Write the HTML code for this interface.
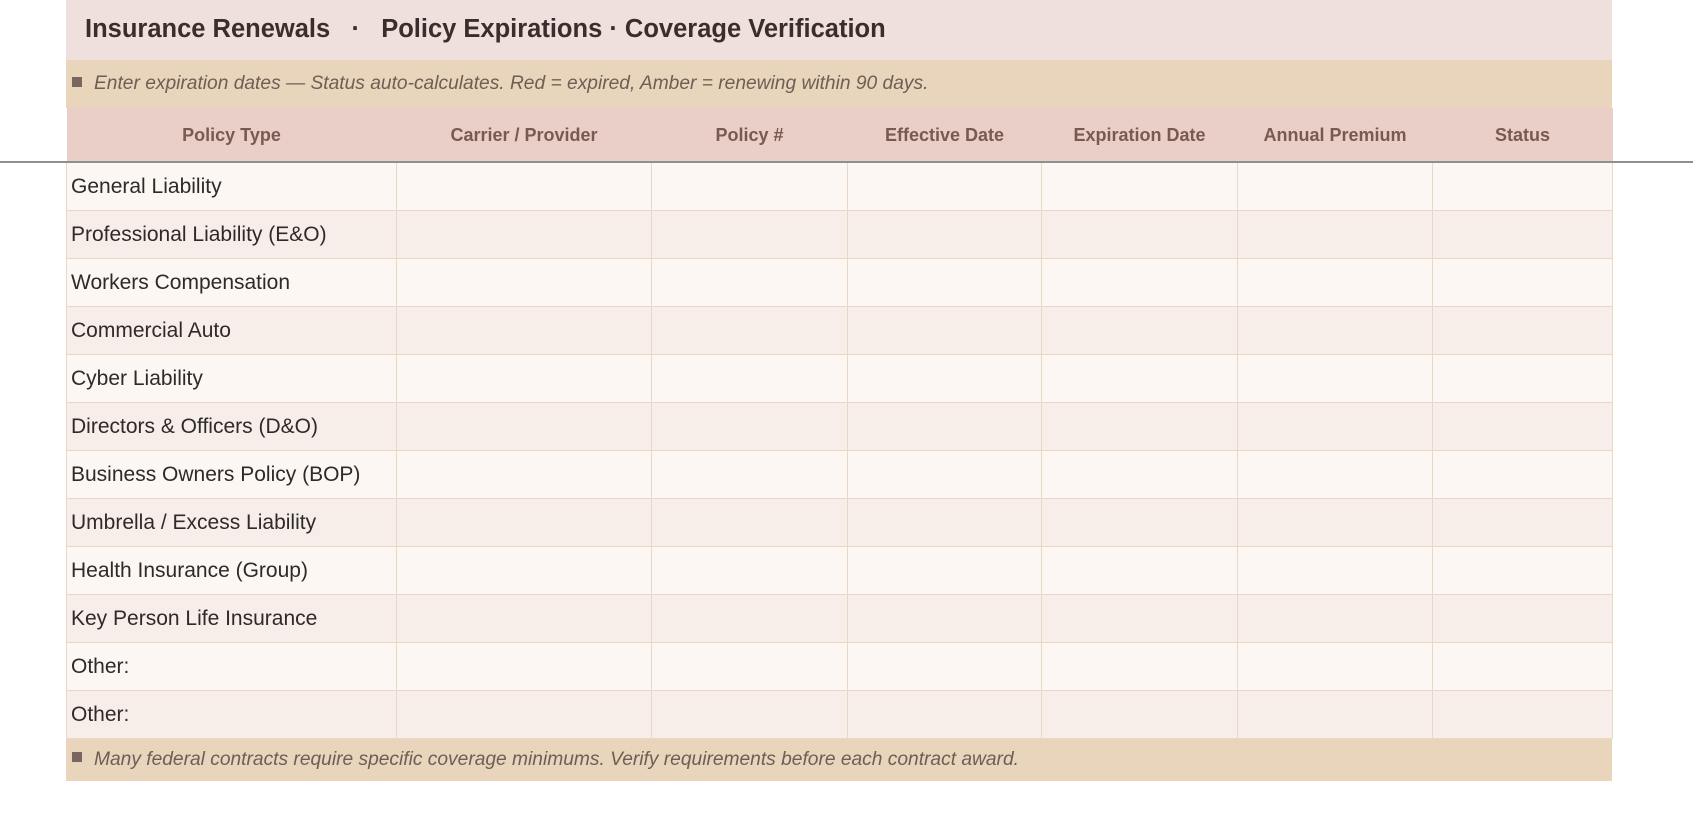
<!DOCTYPE html>
<html><head><style>
body{margin:0;width:1693px;height:817px;background:#fff;font-family:"Liberation Sans",sans-serif;position:relative;overflow:hidden}
.wrap{position:absolute;left:66px;top:0;width:1546px}
.title{height:60px;background:#efe0dd;font-weight:bold;font-size:25.5px;color:#3a2e2a;line-height:58px;padding-left:19px;white-space:pre}
.note{height:48px;background:#e8d5bc;font-style:italic;font-size:19.2px;color:#6e5e55;line-height:48px;padding-left:6px}
.sq{display:inline-block;width:10px;height:10px;background:#7a6660;margin-right:12px;vertical-align:middle;position:relative;top:-2px}
table{border-collapse:collapse;width:1546px;table-layout:fixed}
th{height:54px;box-sizing:border-box;background:#e9cfc7;color:#7a5a50;font-size:18px;font-weight:bold;padding:2px 0 0 0}
tr{height:48px}
td{height:48px;box-sizing:border-box;border:1px solid #ead8c6;padding:2px 0 0 4px;font-size:21px;color:#2e2a28}
tr.a td{background:#fcf7f3}
tr.b td{background:#f7eeea}
.line{position:absolute;left:0;top:161px;width:1693px;height:2px;background:#8f8f8f}
.foot{height:42px;background:#e8d5bc;font-style:italic;font-size:19.2px;color:#6e5e55;line-height:42px;padding-left:6px}
</style></head><body>
<div class="wrap">
<div class="title">Insurance Renewals   ·   Policy Expirations · Coverage Verification</div>
<div class="note"><span class="sq"></span>Enter expiration dates — Status auto-calculates. Red = expired, Amber = renewing within 90 days.</div>
<table>
<colgroup><col style="width:330px"><col style="width:255px"><col style="width:196px"><col style="width:194px"><col style="width:196px"><col style="width:195px"><col style="width:180px"></colgroup>
<tr style="height:54px"><th>Policy Type</th><th>Carrier / Provider</th><th>Policy #</th><th>Effective Date</th><th>Expiration Date</th><th>Annual Premium</th><th>Status</th></tr>
<tr class="a"><td>General Liability</td><td></td><td></td><td></td><td></td><td></td><td></td></tr>
<tr class="b"><td>Professional Liability (E&amp;O)</td><td></td><td></td><td></td><td></td><td></td><td></td></tr>
<tr class="a"><td>Workers Compensation</td><td></td><td></td><td></td><td></td><td></td><td></td></tr>
<tr class="b"><td>Commercial Auto</td><td></td><td></td><td></td><td></td><td></td><td></td></tr>
<tr class="a"><td>Cyber Liability</td><td></td><td></td><td></td><td></td><td></td><td></td></tr>
<tr class="b"><td>Directors &amp; Officers (D&amp;O)</td><td></td><td></td><td></td><td></td><td></td><td></td></tr>
<tr class="a"><td>Business Owners Policy (BOP)</td><td></td><td></td><td></td><td></td><td></td><td></td></tr>
<tr class="b"><td>Umbrella / Excess Liability</td><td></td><td></td><td></td><td></td><td></td><td></td></tr>
<tr class="a"><td>Health Insurance (Group)</td><td></td><td></td><td></td><td></td><td></td><td></td></tr>
<tr class="b"><td>Key Person Life Insurance</td><td></td><td></td><td></td><td></td><td></td><td></td></tr>
<tr class="a"><td>Other:</td><td></td><td></td><td></td><td></td><td></td><td></td></tr>
<tr class="b"><td>Other:</td><td></td><td></td><td></td><td></td><td></td><td></td></tr>
</table>
<div class="foot"><span class="sq"></span>Many federal contracts require specific coverage minimums. Verify requirements before each contract award.</div>
</div>
<div class="line"></div>
</body></html>
